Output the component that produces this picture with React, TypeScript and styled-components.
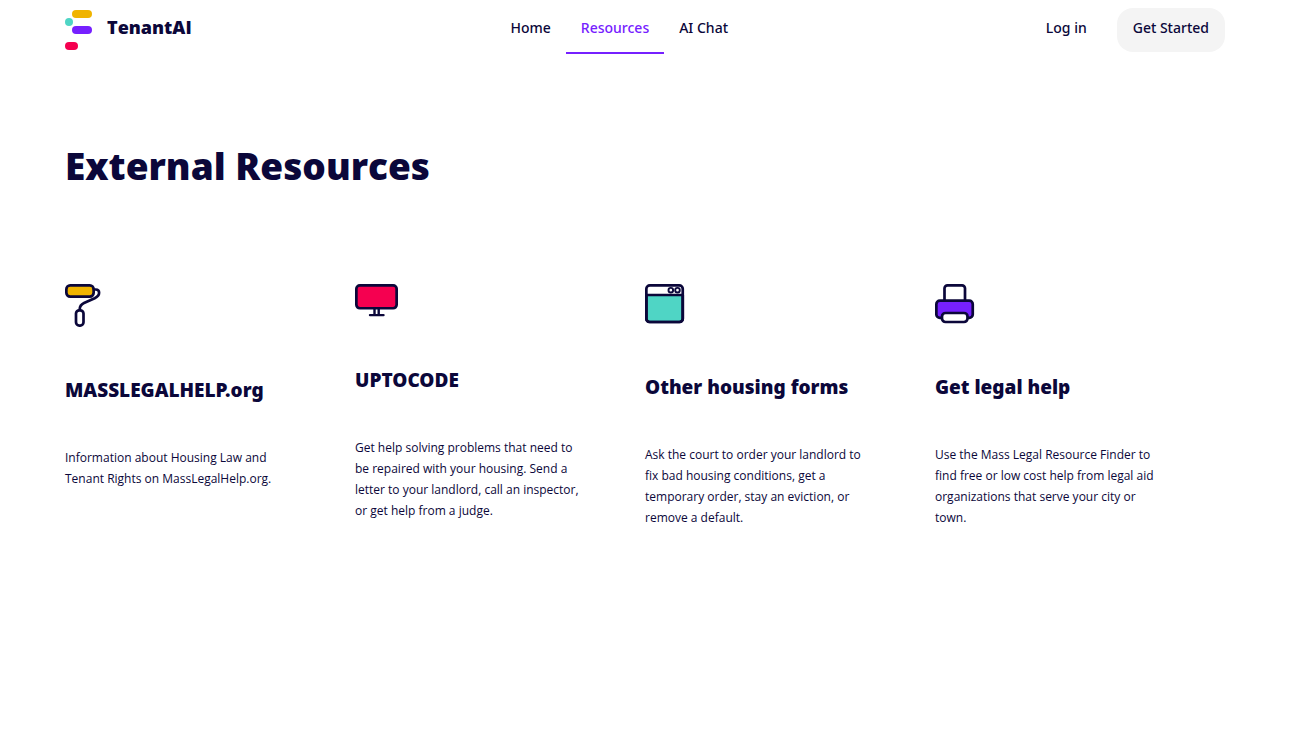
import React from "react";
import styled, { createGlobalStyle } from "styled-components";

const ink = "#0b073a";
const purple = "#7620ff";
const yellow = "#f0b400";
const red = "#f50050";
const teal = "#4fd5c5";

const GlobalStyle = createGlobalStyle`
  *, *::before, *::after { box-sizing: border-box; }
  body {
    margin: 0;
    background: #fff;
    color: ${ink};
    font-family: "Open Sans", sans-serif;
  }
`;

const Header = styled.header`
  display: flex;
  align-items: center;
  justify-content: space-between;
  height: 60px;
  padding: 0 88px 0 65px;
`;

const Brand = styled.a`
  display: flex;
  align-items: center;
  gap: 14px;
  padding-right: 16px;
  color: ${ink};
  text-decoration: none;
`;

const BrandName = styled.span`
  font-size: 18px;
  font-weight: 800;
  line-height: 24px;
  padding-bottom: 6px;
`;

const Nav = styled.nav`
  display: flex;
  align-self: start;
`;

const NavLink = styled.a<{ $active?: boolean }>`
  padding: 18px 15px 14px;
  border-bottom: 2px solid ${({ $active }) => ($active ? purple : "transparent")};
  color: ${({ $active }) => ($active ? purple : ink)};
  font-family: "Noto Sans", sans-serif;
  font-size: 14px;
  font-weight: 500;
  line-height: 20px;
  text-decoration: none;
`;

const Account = styled.div`
  display: flex;
  align-items: center;
  gap: 15px;
`;

const LoginLink = styled.a`
  padding: 0 15px 4px;
  color: ${ink};
  font-family: "Noto Sans", sans-serif;
  font-size: 14px;
  font-weight: 500;
  line-height: 20px;
  text-decoration: none;
`;

const StartButton = styled.button`
  height: 44px;
  padding: 0 16px 4px;
  border: 0;
  border-radius: 16px;
  background: #f4f4f4;
  color: ${ink};
  font-family: "Noto Sans", sans-serif;
  font-size: 14px;
  font-weight: 500;
  line-height: 20px;
  cursor: pointer;
`;

const Main = styled.main`
  padding: 80px 88px 80px 65px;
`;

const Title = styled.h1`
  margin: 0;
  font-size: 37px;
  font-weight: 800;
  line-height: 52px;
`;

const Cards = styled.div`
  display: grid;
  grid-template-columns: repeat(4, 1fr);
  margin-top: 92px;
`;

const Card = styled.article`
  padding-right: 60px;

  svg { display: block; }
`;

const CardTitle = styled.h2`
  margin: 50px 0 0;
  font-family: "Noto Sans", sans-serif;
  font-size: 19px;
  font-weight: 900;
  line-height: 26px;
`;

const CardText = styled.p`
  margin: 44px 0 0;
  font-size: 12px;
  line-height: 21px;
`;

const Logo = () => (
  <svg width="28" height="40" viewBox="0 0 28 40" aria-hidden="true">
    <rect x="7" y="0" width="20" height="8" rx="4" fill={yellow} />
    <circle cx="4" cy="12" r="4" fill={teal} />
    <rect x="7" y="16" width="20" height="8" rx="4" fill={purple} />
    <rect x="0" y="32" width="13" height="8" rx="4" fill={red} />
  </svg>
);

const stroke = { stroke: ink, strokeWidth: 2.7, strokeLinejoin: "round", strokeLinecap: "round" } as const;

const RollerIcon = () => (
  <svg width="36" height="43" viewBox="0 0 36 43" fill="none" {...stroke} aria-hidden="true">
    <rect x="1.35" y="1.35" width="27.3" height="11.3" rx="3.8" fill={yellow} />
    <path d="M29 5.5h1.8c2.2 0 3.3 1.3 3.3 3.2c0 3-1.9 4.3-4.4 5.5L19 19c-3 1.4-4.300 3-4.300 6.500" />
    <rect x="11" y="26.300" width="7.500" height="15.300" rx="3.300" />
  </svg>
);

const MonitorIcon = () => (
  <svg width="43" height="33" viewBox="0 0 43 33" fill="none" {...stroke} aria-hidden="true">
    <rect x="1.350" y="1.350" width="40.300" height="22.900" rx="3.500" fill={red} />
    <path d="M19.500 25v6M23.700 25v6M15 31.100h13.500" strokeWidth="2.400" />
  </svg>
);

const WindowIcon = () => (
  <svg width="40" height="40" viewBox="0 0 40 40" fill="none" {...stroke} aria-hidden="true">
    <path d="M1.350 11h36.400V35a3 3 0 0 1-3 3H4.350a3 3 0 0 1-3-3z" fill={teal} />
    <rect x="1.350" y="1.350" width="36.400" height="36.650" rx="3.500" />
    <circle cx="25.800" cy="6.200" r="2.300" strokeWidth="1.900" />
    <circle cx="32.500" cy="6.200" r="2.300" strokeWidth="1.900" />
  </svg>
);

const PrinterIcon = () => (
  <svg width="40" height="40" viewBox="0 0 40 40" fill="none" {...stroke} aria-hidden="true">
    <path d="M9.500 17V4.350a3 3 0 0 1 3-3h14.500a3 3 0 0 1 3 3V17" fill="#fff" />
    <rect x="1.350" y="16.700" width="36.400" height="17.200" rx="3.500" fill={purple} />
    <rect x="7" y="29" width="25.500" height="9" rx="3.500" fill="#fff" />
  </svg>
);

const resources = [
  {
    Icon: RollerIcon,
    title: "MASSLEGALHELP.org",
    text: "Information about Housing Law and Tenant Rights on MassLegalHelp.org.",
  },
  {
    Icon: MonitorIcon,
    title: "UPTOCODE",
    text: "Get help solving problems that need to be repaired with your housing. Send a letter to your landlord, call an inspector, or get help from a judge.",
  },
  {
    Icon: WindowIcon,
    title: "Other housing forms",
    text: "Ask the court to order your landlord to fix bad housing conditions, get a temporary order, stay an eviction, or remove a default.",
  },
  {
    Icon: PrinterIcon,
    title: "Get legal help",
    text: "Use the Mass Legal Resource Finder to find free or low cost help from legal aid organizations that serve your city or town.",
  },
];

export default function App() {
  return (
    <>
      <GlobalStyle />
      <Header>
        <Brand href="#">
          <Logo />
          <BrandName>TenantAI</BrandName>
        </Brand>
        <Nav>
          <NavLink href="#home">Home</NavLink>
          <NavLink href="#resources" $active aria-current="page">Resources</NavLink>
          <NavLink href="#chat">AI Chat</NavLink>
        </Nav>
        <Account>
          <LoginLink href="#login">Log in</LoginLink>
          <StartButton type="button">Get Started</StartButton>
        </Account>
      </Header>
      <Main>
        <Title>External Resources</Title>
        <Cards>
          {resources.map(({ Icon, title, text }) => (
            <Card key={title}>
              <Icon />
              <CardTitle>{title}</CardTitle>
              <CardText>{text}</CardText>
            </Card>
          ))}
        </Cards>
      </Main>
    </>
  );
}
